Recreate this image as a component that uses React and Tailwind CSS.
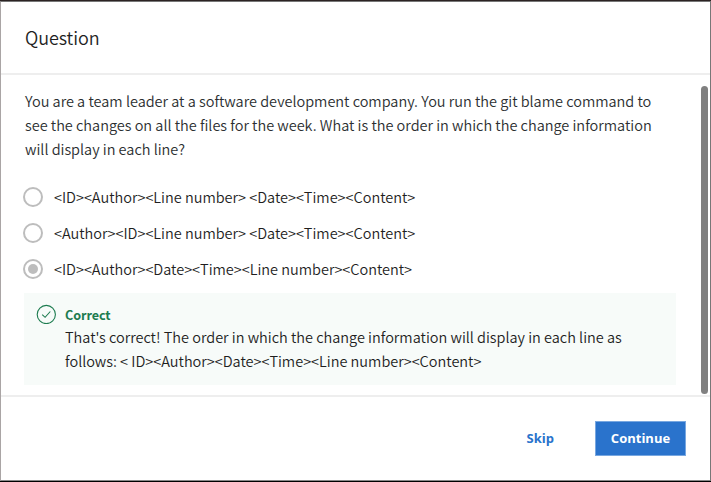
import React from "react";

const options = [
  { text: "<ID><Author><Line number> <Date><Time><Content>", selected: false },
  { text: "<Author><ID><Line number> <Date><Time><Content>", selected: false },
  { text: "<ID><Author><Date><Time><Line number><Content>", selected: true },
];

function Option({ text, selected }) {
  return (
    <label className="flex h-9 items-center gap-[11px] text-[#1f1f1f]">
      <span className="flex size-5 shrink-0 items-center justify-center rounded-full border-2 border-[#bdbdbd]">
        {selected && <span className="size-[10px] rounded-full bg-[#bdbdbd]" />}
      </span>
      <span className="whitespace-nowrap">{text}</span>
    </label>
  );
}

export default function App() {
  return (
    <div className="flex h-[482px] w-[711px] flex-col border-y border-t-[#2b2323] border-b-black bg-white font-['Noto_Sans_CJK_SC','Noto_Sans',sans-serif] text-[14.5px] leading-6 font-[350] tracking-[-0.015px] text-[#2c2f31]">
      <div className="flex min-h-0 flex-1 flex-col border border-t-[#777] border-r-[#777] border-b-[#888] border-l-[#aaa5a5]">
        <header className="flex h-[73px] shrink-0 items-center border-b-2 border-[#eeeeee] px-6 pb-[2px] text-[18px] tracking-[-0.09px] text-[#1f1f1f]">
          <h1>Question</h1>
        </header>
        <main className="flex h-[320px] shrink-0 justify-between pr-[2px] pl-[22px]">
          <div className="w-[653px] pt-[14px]">
            <div className="pl-[2px] whitespace-nowrap">
              <p>You are a team leader at a software development company. You run the git blame command to</p>
              <p>see the changes on all the files for the week. What is the order in which the change information</p>
              <p>will display in each line?</p>
            </div>
            <div className="mt-[18px]">
              {options.map((option) => (
                <Option key={option.text} {...option} />
              ))}
            </div>
            <section className="mt-[6px] ml-px flex h-[92px] gap-[9px] bg-[#f7fbf9] pt-[11px] pl-3 text-[#1f1f1f]">
              <svg className="size-5 shrink-0" viewBox="0 0 20 20" fill="none" stroke="#1d7c50">
                <circle cx="10.3" cy="10.5" r="9.1" strokeWidth="1.1" />
                <path d="M6.2 10.6 9.1 13.3 14.3 7.5" strokeWidth="1.1" />
              </svg>
              <div className="whitespace-nowrap">
                <h2 className="text-[12.6px] leading-[22px] font-bold tracking-[-0.07px] text-[#1d7c50]">Correct</h2>
                <div className="-mt-px">
                  <p>That's correct! The order in which the change information will display in each line as</p>
                  <p>follows: &lt; ID&gt;&lt;Author&gt;&lt;Date&gt;&lt;Time&gt;&lt;Line number&gt;&lt;Content&gt;</p>
                </div>
              </div>
            </section>
          </div>
          <div className="mt-[11px] h-[308px] w-[7px] rounded-full bg-[#808080]" />
        </main>
        <footer className="flex flex-1 items-start justify-end border-t-2 border-[#eeeeee] pt-6 pr-6 font-['Open_Sans',sans-serif] text-[13px] font-bold tracking-normal">
          <button className="mr-[41px] h-[34px] text-[#2a73cc]">Skip</button>
          <button className="h-[35px] w-[91px] border border-[#78a7e0] bg-[#2a73cc] pb-px text-white">Continue</button>
        </footer>
      </div>
    </div>
  );
}
